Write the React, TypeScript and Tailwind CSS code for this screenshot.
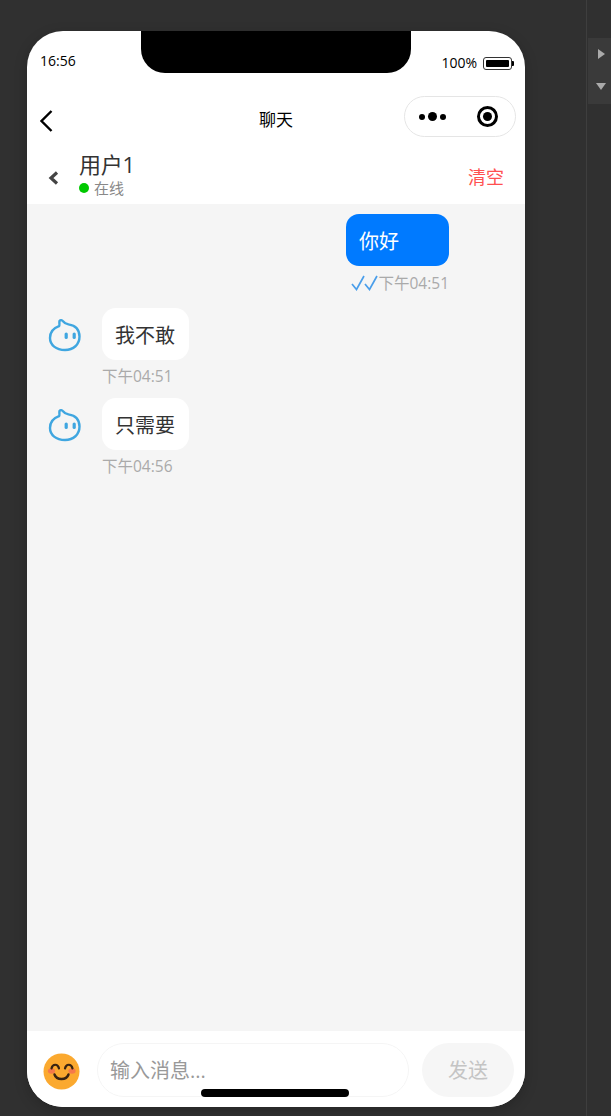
const font = { fontFamily: '"Open Sans", "Noto Sans CJK SC", sans-serif' };

function Avatar() {
  return (
    <svg width="34" height="34" viewBox="0 0 34 34" fill="none" className="shrink-0">
      <path
        d="M11.5 3 C12.5 1.6 14 2 15 3.2 C16.2 4.8 18 5.8 20.5 6.4 C27.5 7.6 31.5 12 31.5 18.5 C31.5 26.5 25.5 32 17 32 C8 32 2 27 2 20 C2 14 6 10 11 8.2 C12 7.4 11 5 11.5 3 Z"
        stroke="#3fa6e0"
        strokeWidth="2.4"
        strokeLinejoin="round"
      />
      <rect x="16.6" y="14.5" width="3.2" height="6.5" rx="1.6" fill="#3fa6e0" />
      <rect x="24.6" y="14.5" width="3.2" height="6.5" rx="1.6" fill="#3fa6e0" />
    </svg>
  );
}

function Emoji() {
  return (
    <svg width="38" height="38" viewBox="0 0 38 38" fill="none" className="shrink-0">
      <circle cx="18.5" cy="18.5" r="18" fill="#fba92f" />
      <ellipse cx="8.5" cy="18" rx="3.6" ry="2.8" fill="#f5794a" />
      <ellipse cx="29" cy="18" rx="3.6" ry="2.8" fill="#f5794a" />
      <path d="M8.5 15.5 C9.5 10.5 15 10.5 16 15.5" stroke="#3a2412" strokeWidth="2.2" strokeLinecap="round" />
      <path d="M22 15.5 C23 10.5 28.5 10.5 29.5 15.5" stroke="#3a2412" strokeWidth="2.2" strokeLinecap="round" />
      <path d="M11.5 21.5 C13.5 27.5 23.5 27.5 25.5 21.5" stroke="#3a2412" strokeWidth="2.4" strokeLinecap="round" />
    </svg>
  );
}

function Checks() {
  return (
    <svg width="27" height="18" viewBox="0 0 27 18" fill="none" className="shrink-0">
      <path d="M1 10 L5.5 15.5 L13 2" stroke="#4a9eea" strokeWidth="1.7" />
      <path d="M14 10 L18.5 15.5 L26 2" stroke="#4a9eea" strokeWidth="1.7" />
    </svg>
  );
}

function Incoming({ text, time }: { text: string; time: string }) {
  return (
    <div className="flex items-start">
      <div className="pl-[21px] pt-[10px] w-[75px]">
        <Avatar />
      </div>
      <div className="flex flex-col items-start">
        <div className="h-[52px] pl-[13px] pr-[14px] pt-[3px] flex items-center rounded-[14px] bg-white text-[20px] text-[#333] leading-none">
          {text}
        </div>
        <div className="mt-[6px] h-[20px] leading-[20px] text-[15.5px] text-[#aaa]">{time}</div>
      </div>
    </div>
  );
}

export default function App() {
  return (
    <div className="flex w-[611px] h-[1116px] overflow-hidden bg-[#303030]" style={font}>
      <div className="relative shrink-0 ml-[27px] mt-[31px] w-[498px] h-[1076px] rounded-[36px] overflow-hidden bg-white flex flex-col shadow-[0_4px_14px_rgba(0,0,0,0.2)]">
        {/* notch */}
        <div className="absolute left-[114px] top-0 w-[270px] h-[42px] bg-black rounded-b-[24px]" />

        {/* status bar */}
        <div className="h-[65px] shrink-0 flex items-start justify-between pl-[13px] pr-[11px] pt-[20px]">
          <span className="text-[14px] leading-[20px] text-black">16:56</span>
          <div className="flex items-center gap-[6px] pt-[2px]">
            <span className="text-[14px] leading-[20px] text-black">100%</span>
            <div className="flex items-center">
              <div className="w-[29px] h-[13px] rounded-[3px] border border-[#333] p-[2px]">
                <div className="w-full h-full bg-black rounded-[1px]" />
              </div>
              <div className="w-[2px] h-[5px] bg-black rounded-r-[1px]" />
            </div>
          </div>
        </div>

        {/* nav bar */}
        <div className="h-[49px] shrink-0 relative flex items-center justify-between pl-[12px] pr-[9px]">
          <svg width="14" height="24" viewBox="0 0 14 24" fill="none">
            <path d="M12.5 2 L2.5 12 L12.5 22" stroke="#000" strokeWidth="2.4" />
          </svg>
          <span className="absolute left-[232px] top-[12px] text-[17px] leading-[24px] text-black">聊天</span>
          <div className="w-[112px] h-[41px] -mt-[8px] rounded-full border border-[#e5e5e5] bg-white flex items-center pl-[14px] pr-[17px] justify-between">
            <div className="flex items-center gap-[3px]">
              <div className="w-[6px] h-[6px] rounded-full bg-black" />
              <div className="w-[9px] h-[9px] rounded-full bg-black" />
              <div className="w-[6px] h-[6px] rounded-full bg-black" />
            </div>
            <div className="w-[21px] h-[21px] rounded-full border-[3px] border-black flex items-center justify-center">
              <div className="w-[9px] h-[9px] rounded-full bg-black" />
            </div>
          </div>
        </div>

        {/* chat header */}
        <div className="h-[59px] shrink-0 flex items-center pl-[21px] pr-[21px]">
          <svg width="11" height="14" viewBox="0 0 11 14" fill="none" className="mt-[6px]">
            <path d="M9 1.5 L3 7 L9 12.5" stroke="#444" strokeWidth="3.2" />
          </svg>
          <div className="ml-[20px] flex flex-col flex-1 -mt-[1px]">
            <span className="text-[22px] leading-[28px] text-[#333] tracking-[-0.3px]">用户1</span>
            <div className="flex items-center h-[20px]">
              <div className="w-[10px] h-[10px] rounded-full bg-[#00c800]" />
              <span className="ml-[5px] text-[15px] leading-[20px] text-[#888]">在线</span>
            </div>
          </div>
          <span className="text-[18px] leading-[24px] text-[#ff5050] mt-[4px]">清空</span>
        </div>

        {/* messages */}
        <div className="flex-1 bg-[#f5f5f5] flex flex-col pt-[10px]">
          <div className="flex flex-col items-end pr-[76px]">
            <div className="w-[103px] h-[52px] pt-[3px] rounded-[13px] bg-[#007aff] text-white text-[20px] leading-none flex items-center pl-[13px]">
              你好
            </div>
            <div className="mt-[7px] h-[20px] flex items-center">
              <Checks />
              <span className="text-[15.5px] leading-[20px] text-[#aaa]">下午04:51</span>
            </div>
          </div>
          <div className="mt-[15px] flex flex-col gap-[12px]">
            <Incoming text="我不敢" time="下午04:51" />
            <Incoming text="只需要" time="下午04:56" />
          </div>
        </div>

        {/* input bar */}
        <div className="h-[76px] shrink-0 bg-white flex items-start pl-[16px] pr-[11px] pt-[12px]">
          <div className="pt-[10px] w-[54px]">
            <Emoji />
          </div>
          <div className="w-[312px] h-[54px] pt-[2px] rounded-[27px] border border-[#f5f5f5] bg-white flex items-center pl-[12px] text-[20px] text-[#999]">
            输入消息...
          </div>
          <div className="ml-[13px] w-[92px] h-[54px] pt-[2px] rounded-[27px] bg-[#f6f6f6] flex items-center justify-center text-[20px] text-[#c4c4c4]">
            发送
          </div>
        </div>

        {/* home indicator */}
        <div className="absolute left-[174px] bottom-[10px] w-[148px] h-[8px] rounded-full bg-black" />
      </div>

      {/* right rail */}
      <div className="ml-[61px] flex-1 border-l border-[#3e3e3e] pt-[38px] pl-[1px]">
        <div className="h-[66px] bg-[#3a3a3a] flex flex-col items-center gap-[24px] pt-[11px] pl-[3px]">
          <div className="w-0 h-0 border-y-[5px] border-y-transparent border-l-[7px] border-l-[#aaa]" />
          <div className="w-0 h-0 border-x-[5px] border-x-transparent border-t-[7px] border-t-[#aaa]" />
        </div>
      </div>
    </div>
  );
}
